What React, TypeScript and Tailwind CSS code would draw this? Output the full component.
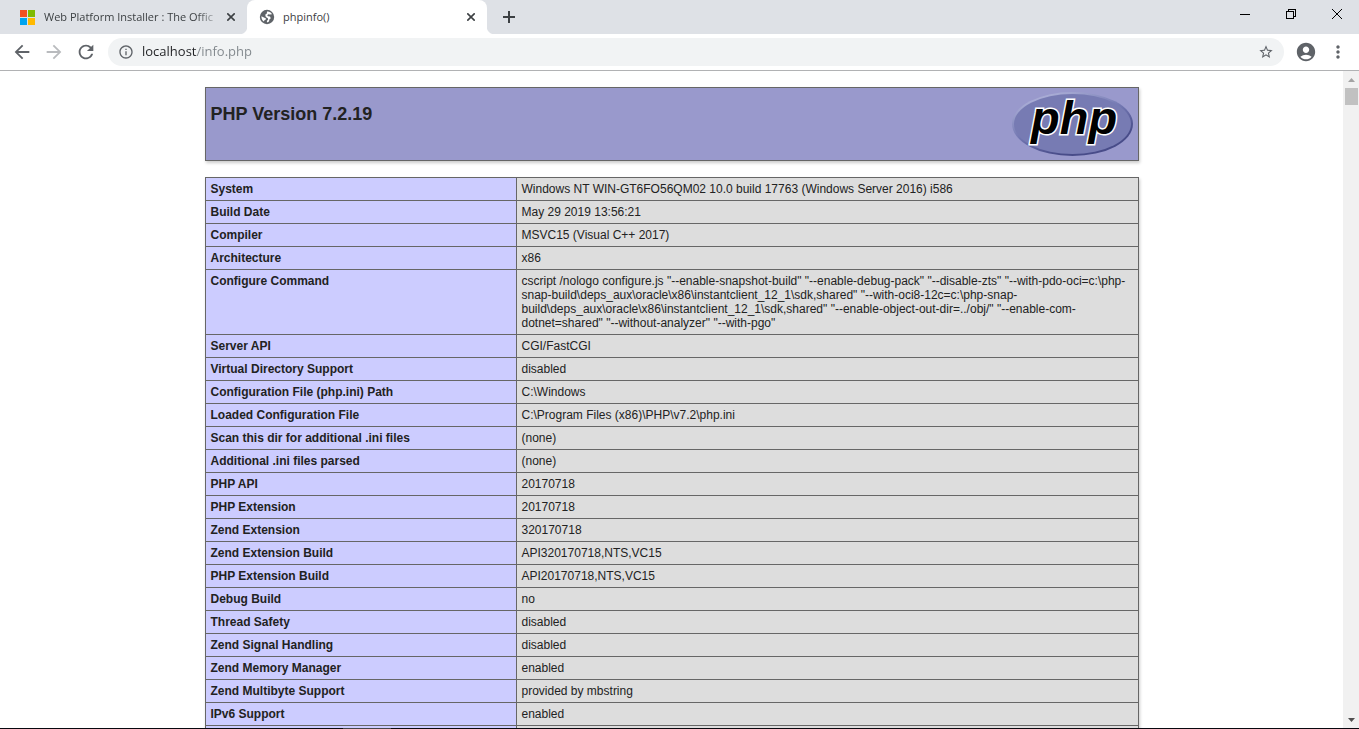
import type { ReactNode } from "react";
import {
  MdAccountCircle,
  MdArrowBack,
  MdArrowForward,
  MdInfoOutline,
  MdMoreVert,
  MdRefresh,
  MdStarBorder,
} from "react-icons/md";

const rows: [string, string][] = [
  ["System", "Windows NT WIN-GT6FO56QM02 10.0 build 17763 (Windows Server 2016) i586"],
  ["Build Date", "May 29 2019 13:56:21"],
  ["Compiler", "MSVC15 (Visual C++ 2017)"],
  ["Architecture", "x86"],
  [
    "Configure Command",
    'cscript /nologo configure.js "--enable-snapshot-build" "--enable-debug-pack" "--disable-zts" "--with-pdo-oci=c:\\php-snap-build\\deps_aux\\oracle\\x86\\instantclient_12_1\\sdk,shared" "--with-oci8-12c=c:\\php-snap-build\\deps_aux\\oracle\\x86\\instantclient_12_1\\sdk,shared" "--enable-object-out-dir=../obj/" "--enable-com-dotnet=shared" "--without-analyzer" "--with-pgo"',
  ],
  ["Server API", "CGI/FastCGI"],
  ["Virtual Directory Support", "disabled"],
  ["Configuration File (php.ini) Path", "C:\\Windows"],
  ["Loaded Configuration File", "C:\\Program Files (x86)\\PHP\\v7.2\\php.ini"],
  ["Scan this dir for additional .ini files", "(none)"],
  ["Additional .ini files parsed", "(none)"],
  ["PHP API", "20170718"],
  ["PHP Extension", "20170718"],
  ["Zend Extension", "320170718"],
  ["Zend Extension Build", "API320170718,NTS,VC15"],
  ["PHP Extension Build", "API20170718,NTS,VC15"],
  ["Debug Build", "no"],
  ["Thread Safety", "disabled"],
  ["Zend Signal Handling", "disabled"],
  ["Zend Memory Manager", "enabled"],
  ["Zend Multibyte Support", "provided by mbstring"],
  ["IPv6 Support", "enabled"],
  ["", ""],
];

function CloseTab({ label }: { label: string }) {
  return (
    <button type="button" aria-label={label} className="flex size-4 shrink-0 items-center justify-center">
      <svg viewBox="0 0 8 8" className="size-2 stroke-[#3c4043]" strokeWidth="1.6" fill="none">
        <path d="M0.3 0.3 7.7 7.7M7.7 0.3 0.3 7.7" />
      </svg>
    </button>
  );
}

function Globe() {
  return (
    <svg viewBox="0 0 16 16" className="size-4 shrink-0" fill="none">
      <circle cx="8" cy="8" r="7.2" fill="#5f6368" />
      <path
        d="M8 2.6C9.8 2.2 12 3.2 13 5.3L10.8 5.6 9.4 5.2 8.2 6.2 9 7.2 11 7.6 11.8 9.2 10.4 10.6 10 12.6 8.2 13.4 7.8 12 9.2 10.6 8.8 9.2 6.8 8 6.2 5.8 7.8 4.4zM2.4 7.2 5 8.4 7 9.4 6.6 10.8 5.4 11.2 5 12.6C3.4 11.5 2.3 9.6 2.4 7.2z"
        fill="white"
      />
    </svg>
  );
}

function WindowButton({ label, children }: { label: string; children: ReactNode }) {
  return (
    <button type="button" aria-label={label} className="flex h-7 w-[46px] items-center justify-center pl-px">
      {children}
    </button>
  );
}

function TabStrip() {
  return (
    <header className="flex h-[34px] shrink-0 bg-[#dee1e6] text-[11px] text-[#3c4043]">
      <div className="flex w-[239px] items-center pl-5">
        <svg viewBox="0 0 15 15" className="size-[15px] shrink-0" shapeRendering="crispEdges">
          <path fill="#f25022" d="M0 0h7v7H0z" />
          <path fill="#7fba00" d="M8 0h7v7H8z" />
          <path fill="#00a4ef" d="M0 8h7v7H0z" />
          <path fill="#ffb900" d="M8 8h7v7H8z" />
        </svg>
        <a
          href="#installer"
          className="ml-[9px] min-w-0 flex-1 overflow-hidden whitespace-nowrap [mask-image:linear-gradient(to_right,black_85%,transparent)]"
        >
          Web Platform Installer : The Offic
        </a>
        <CloseTab label="Close Web Platform Installer" />
      </div>
      <span className="size-2 self-end bg-[radial-gradient(circle_at_0_0,#dee1e6_8px,white_9px)]" />
      <div className="flex w-60 items-center rounded-t-lg bg-white pl-3 pr-2">
        <Globe />
        <a href="#phpinfo" className="ml-2 flex-1 whitespace-nowrap">
          phpinfo()
        </a>
        <CloseTab label="Close phpinfo()" />
      </div>
      <span className="size-2 self-end bg-[radial-gradient(circle_at_100%_0,#dee1e6_8px,white_9px)]" />
      <button type="button" aria-label="New tab" className="flex w-7 items-center justify-center">
        <svg viewBox="0 0 12 12" className="size-3 fill-[#3c4043]">
          <path d="M5 0h2v5h5v2H7v5H5V7H0V5h5z" />
        </svg>
      </button>
      <div className="ml-auto flex">
        <WindowButton label="Minimize">
          <svg viewBox="0 0 10 10" className="size-2.5" shapeRendering="crispEdges">
            <path d="M0 5h10v1H0z" />
          </svg>
        </WindowButton>
        <WindowButton label="Restore">
          <svg viewBox="0 0 10 10" className="size-2.5 fill-none stroke-black" shapeRendering="crispEdges">
            <path d="M0.5 2.5h7v7h-7zM2.5 2.5v-2h7v7h-2" />
          </svg>
        </WindowButton>
        <WindowButton label="Close">
          <svg viewBox="0 0 10 10" className="size-2.5 fill-none stroke-black">
            <path d="M0 0l10 10M10 0L0 10" />
          </svg>
        </WindowButton>
      </div>
    </header>
  );
}

function Toolbar() {
  return (
    <nav className="flex h-[37px] shrink-0 items-center border-b border-[#b1b2b4] bg-white px-1.5 text-[#5f6368]">
      <button type="button" aria-label="Back" className="flex w-8 justify-center">
        <MdArrowBack className="size-[22px]" />
      </button>
      <button type="button" aria-label="Forward" className="flex w-8 justify-center text-[#b9bbbe]">
        <MdArrowForward className="size-[22px]" />
      </button>
      <button type="button" aria-label="Reload" className="flex w-8 justify-center">
        <MdRefresh className="size-[22px]" />
      </button>
      <div className="ml-1.5 flex h-7 flex-1 items-center rounded-full bg-[#f1f3f4] px-2.5">
        <MdInfoOutline className="size-4 shrink-0" />
        <input
          type="text"
          aria-label="Address"
          defaultValue="localhost/info.php"
          className="ml-2 min-w-0 flex-1 bg-[linear-gradient(to_right,#202124_55px,#80868b_55px)] bg-clip-text text-[13px] text-transparent outline-none"
        />
        <button type="button" aria-label="Bookmark this page">
          <MdStarBorder className="size-4" />
        </button>
      </div>
      <button type="button" aria-label="Profile" className="ml-[11px] flex">
        <MdAccountCircle className="size-[22px]" />
      </button>
      <button type="button" aria-label="Menu" className="ml-[11px] mr-[5px] flex w-5 justify-center">
        <MdMoreVert className="size-5" />
      </button>
    </nav>
  );
}

function PhpLogo() {
  return (
    <svg viewBox="0 0 121 64" role="img" aria-label="PHP logo" className="h-16 w-[121px] shrink-0">
      <defs>
        <linearGradient id="rim" x1="0.2" y1="0" x2="0.8" y2="1">
          <stop offset="0" stopColor="#b4b7dc" />
          <stop offset="0.45" stopColor="#7479b3" />
          <stop offset="0.8" stopColor="#484c89" />
        </linearGradient>
      </defs>
      <ellipse cx="60.5" cy="32" rx="60.5" ry="32" fill="url(#rim)" />
      <ellipse cx="60.5" cy="32" rx="58.5" ry="30" fill="#777bb3" />
      <text
        x="19"
        y="42"
        fontSize="47"
        className="fill-black stroke-white font-['Liberation_Sans',Arial,sans-serif] font-bold italic"
        strokeWidth="3"
        paintOrder="stroke"
      >
        php
      </text>
    </svg>
  );
}

function Scrollbar() {
  return (
    <div className="flex w-4 shrink-0 flex-col items-center bg-[#f1f1f1]">
      <button type="button" aria-label="Scroll up" className="flex h-[17px] w-full items-center justify-center">
        <svg viewBox="0 0 7 4" className="h-1 w-[7px] fill-[#a3a3a3]">
          <path d="M0 4 3.5 0 7 4z" />
        </svg>
      </button>
      <div className="h-[17px] w-[13px] bg-[#c1c1c1]" />
      <button
        type="button"
        aria-label="Scroll down"
        className="mt-auto flex h-[17px] w-full items-center justify-center"
      >
        <svg viewBox="0 0 7 4" className="h-1 w-[7px] fill-[#505050]">
          <path d="M0 0h7L3.5 4z" />
        </svg>
      </button>
    </div>
  );
}

export default function App() {
  return (
    <div className="flex h-screen flex-col overflow-hidden bg-white font-['Open_Sans',sans-serif]">
      <TabStrip />
      <Toolbar />
      <div className="flex min-h-0 flex-1">
        <main className="min-w-0 flex-1 overflow-hidden pt-4 font-['Liberation_Sans',Arial,sans-serif] text-[#222222]">
          <div className="mx-auto flex max-w-[934px] flex-col gap-4">
            <div className="flex items-start justify-between border border-[#666666] bg-[#9999cc] px-[5px] py-1 shadow-[1px_2px_3px_#cccccc]">
              <h1 className="mt-3 text-lg leading-5 font-bold">PHP Version 7.2.19</h1>
              <PhpLogo />
            </div>
            <table className="w-full table-fixed border-collapse text-xs leading-[14px] shadow-[1px_2px_3px_#cccccc]">
              <colgroup>
                <col className="w-[311px]" />
                <col />
              </colgroup>
              <tbody>
                {rows.map(([name, value]) => (
                  <tr key={name}>
                    <th
                      scope="row"
                      className="border border-[#666666] bg-[#ccccff] px-[5px] py-1 text-left align-top font-bold"
                    >
                      {name}
                    </th>
                    <td className="border border-[#666666] bg-[#dddddd] px-[5px] py-1 align-top wrap-break-word">
                      {value}
                    </td>
                  </tr>
                ))}
              </tbody>
            </table>
          </div>
        </main>
        <Scrollbar />
      </div>
      <footer className="flex h-px shrink-0 bg-[#08080f]">
        <span className="ml-[343px] w-12 bg-[#45454a]" />
      </footer>
    </div>
  );
}
